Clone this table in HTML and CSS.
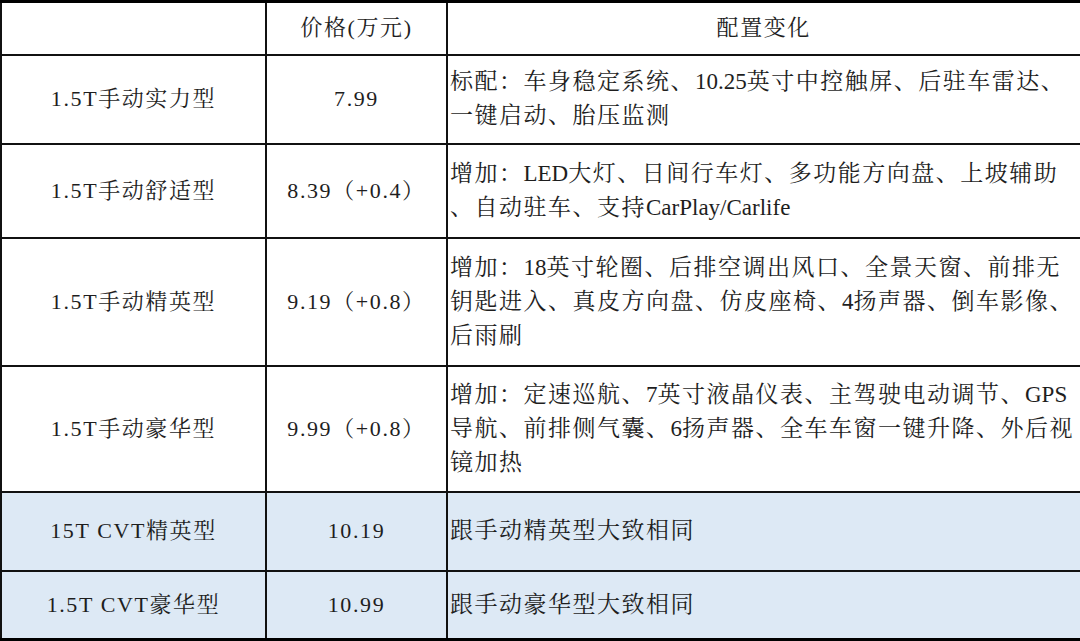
FILE: index.html
```html
<!DOCTYPE html>
<html lang="zh-CN">
<head>
<meta charset="utf-8">
<title>配置表</title>
<link rel="stylesheet" href="styles.css">
</head>
<body>
<table class="spec">
  <colgroup>
    <col class="c-name">
    <col class="c-price">
    <col class="c-desc">
  </colgroup>
  <tr class="r-head">
    <th></th>
    <th class="center">价格(万元)</th>
    <th class="center">配置变化</th>
  </tr>
  <tr class="r-1">
    <td class="center">1.5T手动实力型</td>
    <td class="center">7.99</td>
    <td class="desc">标配：车身稳定系统、<span class="en">10.25</span>英寸中控触屏、后驻车雷达、<br>一键启动、胎压监测</td>
  </tr>
  <tr class="r-2">
    <td class="center">1.5T手动舒适型</td>
    <td class="center">8.39（+0.4）</td>
    <td class="desc">增加：<span class="en">LED</span>大灯、日间行车灯、多功能方向盘、上坡辅助<br>、自动驻车、支持<span class="en">CarPlay/Carlife</span></td>
  </tr>
  <tr class="r-3">
    <td class="center">1.5T手动精英型</td>
    <td class="center">9.19（+0.8）</td>
    <td class="desc">增加：<span class="en">18</span>英寸轮圈、后排空调出风口、全景天窗、前排无<br>钥匙进入、真皮方向盘、仿皮座椅、<span class="en">4</span>扬声器、倒车影像、<br>后雨刷</td>
  </tr>
  <tr class="r-4">
    <td class="center">1.5T手动豪华型</td>
    <td class="center">9.99（+0.8）</td>
    <td class="desc">增加：定速巡航、<span class="en">7</span>英寸液晶仪表、主驾驶电动调节、<span class="en">GPS</span><br>导航、前排侧气囊、<span class="en">6</span>扬声器、全车车窗一键升降、外后视<br>镜加热</td>
  </tr>
  <tr class="r-5 tint">
    <td class="center">15T CVT精英型</td>
    <td class="center">10.19</td>
    <td class="desc">跟手动精英型大致相同</td>
  </tr>
  <tr class="r-6 tint">
    <td class="center">1.5T CVT豪华型</td>
    <td class="center">10.99</td>
    <td class="desc">跟手动豪华型大致相同</td>
  </tr>
</table>
</body>
</html>
```
FILE: styles.css
```css
html, body {
  margin: 0;
  padding: 0;
  background: #ffffff;
}

.spec {
  border-collapse: collapse;
  table-layout: fixed;
  width: 1080px;
  font-family: "Liberation Serif", "Noto Serif CJK SC", "Noto Sans CJK SC", serif;
  font-size: 22px;
  color: #1e1e1e;
  border-top: 3px solid #000;
  border-bottom: 3px solid #000;
  border-left: 2px solid #000;
  border-right: 3px solid #000;
}

.c-name { width: 265px; }
.c-price { width: 181px; }
.c-desc { width: 634px; }

.spec th,
.spec td {
  border: 2px solid #111;
  padding: 0 1px;
  font-weight: normal;
  vertical-align: middle;
  line-height: 34px;
  letter-spacing: 1.6px;
}

.center {
  text-align: center;
}

.spec .desc {
  text-align: left;
  padding-left: 2px;
  white-space: nowrap;
  font-size: 23px;
  letter-spacing: 1.5px;
}

.en {
  letter-spacing: 0;
}

.r-head { height: 53px; }
.r-1 { height: 89px; }
.r-2 { height: 94px; }
.r-3 { height: 128px; }
.r-4 { height: 126px; }
.r-5 { height: 79px; }
.r-6 { height: 69px; }

.tint td {
  background: #dde9f5;
}
```
